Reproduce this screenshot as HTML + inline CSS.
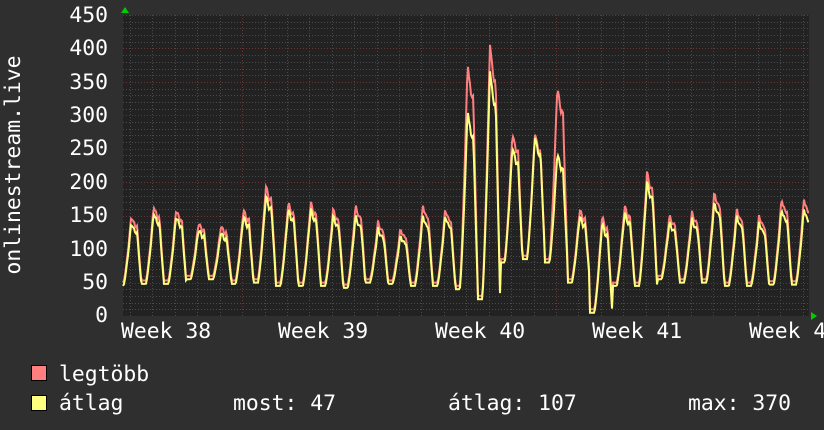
<!DOCTYPE html>
<html><head><meta charset="utf-8"><style>
html,body{margin:0;padding:0;background:#2f2f2f;width:824px;height:430px;overflow:hidden}
svg{display:block}
text{font-family:"DejaVu Sans Mono","Liberation Mono",monospace;fill:#fff;font-size:21.4px}
</style></head><body>
<svg id="g" width="824" height="430" viewBox="0 0 824 430" xmlns="http://www.w3.org/2000/svg">
<rect x="0" y="0" width="824" height="430" fill="#2f2f2f"/>
<rect x="123" y="15" width="686" height="301" fill="#222"/>
<g id="grid"></g>
<g id="lines"></g>
<polygon points="121,13 129,13 125,7" fill="#0c0"/>
<polygon points="811,312 811,320 817,316" fill="#0c0"/>
<g text-anchor="end">
<text x="108" y="22">450</text><text x="108" y="55">400</text><text x="108" y="89">350</text>
<text x="108" y="122">300</text><text x="108" y="155">250</text><text x="108" y="189">200</text>
<text x="108" y="222">150</text><text x="108" y="256">100</text><text x="108" y="289">50</text>
<text x="108" y="322">0</text>
</g>
<text transform="translate(20,165) rotate(-90)" text-anchor="middle">onlinestream.live</text>
<g>
<text x="121" y="338">Week 38</text><text x="278" y="338">Week 39</text>
<text x="435" y="338">Week 40</text><text x="592" y="338">Week 41</text>
<text x="749" y="338">Week 41</text>
</g>
<rect x="31.5" y="365.5" width="15" height="15" fill="#ff7f7f" stroke="#000"/>
<rect x="31.5" y="395.5" width="15" height="15" fill="#ffff7f" stroke="#000"/>
<text x="59" y="381">legtöbb</text>
<text x="59" y="410">átlag</text>
<text x="233" y="410">most: 47</text>
<text x="448" y="410">átlag: 107</text>
<text x="688" y="410">max: 370</text>
</svg>
<script>
var ns="http://www.w3.org/2000/svg";
function el(t,a,p){var e=document.createElementNS(ns,t);for(var k in a)e.setAttribute(k,a[k]);p.appendChild(e);return e;}
var grid=document.getElementById('grid');
var Y=function(v){return 316-v*301/450;};
for(var v=10;v<=450;v+=10){var y=Math.round(Y(v))+.5;var maj=(v%50==0);
el('line',{x1:123,x2:809,y1:y,y2:y,stroke:maj?'#6a3434':'#4a4a4a','stroke-dasharray':'1,2','stroke-width':1},grid);}
for(var i=0;i<31;i++){var x=Math.round(130+i*22.42)+.5;if(x>809)break;var maj=((i-5)%7==0);
el('line',{x1:x,x2:x,y1:15,y2:316,stroke:maj?'#6a3434':'#4a4a4a','stroke-dasharray':'1,2'},grid);}
var peaksY=[140,155,150,130,125,150,180,160,160,150,150,130,120,150,150,310,370,255,270,245,150,140,155,200,140,145,170,150,140,160];
var peaksR=[150,165,160,140,135,160,195,170,170,160,165,140,130,165,160,380,410,275,275,345,160,150,165,215,150,155,185,160,150,175];
var mins=[45,48,48,55,55,48,50,45,45,45,42,50,48,45,45,40,25,80,85,80,50,5,45,45,55,50,50,45,45,47];
function val(x,peaks,off){var t=(x-119)/22.42;var d=Math.floor(t);var ph=t-d;
 if(d<0){return 120;} if(d>29)d=29;
 var pk=peaks[d],mn=mins[d]+off;
 var f;
 if(ph<0.2)f=0;else if(ph<0.55)f=Math.pow((ph-0.2)/0.35,1.3);else if(ph<0.7)f=1-0.15*(ph-0.55)/0.15;else if(ph<0.8)f=0.85;else f=0.85*(1-(ph-0.8)/0.2);
 var n=Math.sin(x*1.7)*3;
 return mn+(pk-mn)*Math.max(0,f)+n*f;}
var ln=document.getElementById('lines');
var pr=[],py=[];
for(var x=123;x<=809;x++){pr.push(x+','+Y(val(x,peaksR,5)).toFixed(1));py.push(x+','+Y(val(x,peaksY,0)).toFixed(1));}
el('polyline',{points:pr.join(' '),fill:'none',stroke:'#ff7f7f','stroke-width':2},ln);
el('polyline',{points:py.join(' '),fill:'none',stroke:'#ffff7f','stroke-width':2},ln);
</script>
</body></html>
